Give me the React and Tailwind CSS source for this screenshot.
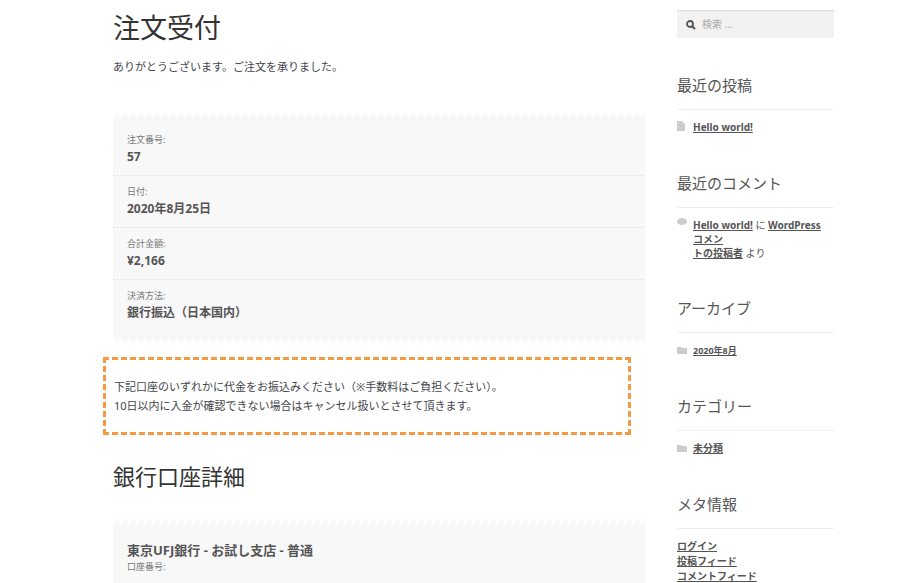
import React from "react";

const Zig = ({ flip }) => (
  <svg className="block w-full h-[6px]" preserveAspectRatio="none" viewBox="0 0 532 6">
    <defs>
      <pattern id={flip ? "zb" : "zt"} width="8" height="6" patternUnits="userSpaceOnUse">
        <path d={flip ? "M0 0 L4 6 L8 0 Z" : "M0 6 L4 0 L8 6 Z"} fill="#f8f8f8" />
      </pattern>
    </defs>
    <rect width="532" height="6" fill={`url(#${flip ? "zb" : "zt"})`} />
  </svg>
);

const Row = ({ label, value, last }) => (
  <div className={`px-[14px] h-[52px] flex flex-col justify-center ${last ? "" : "border-b border-dotted border-[#e2e2e2]"}`}>
    <div className="text-[9px] text-[#777] leading-[14px]">{label}</div>
    <div className="text-[12px] font-bold text-[#555] leading-[20px]">{value}</div>
  </div>
);

const Widget = ({ title, children }) => (
  <div className="mb-[36px]">
    <div className="text-[15px] text-[#555] leading-[24px] pb-[12px] border-b border-[#eee]">{title}</div>
    <div className="pt-[10px] text-[10px] text-[#555]">{children}</div>
  </div>
);

const Icon = ({ children }) => <span className="inline-block w-[10px] mr-[6px] text-[#ccc] shrink-0">{children}</span>;

export default function App() {
  return (
    <div className="w-[919px] h-[583px] overflow-hidden bg-white text-[#43454b]" style={{ fontFamily: "'Noto Sans', 'Noto Sans CJK JP', sans-serif" }}>
      <div className="flex pl-[113px]">
        <div className="w-[532px]">
          <h1 className="text-[27px] text-[#333] leading-[40px] mt-[8px]">注文受付</h1>
          <p className="text-[11px] mt-[10px] leading-[18px]">ありがとうございます。ご注文を承りました。</p>
          <div className="mt-[36px]">
            <Zig />
            <div className="bg-[#f8f8f8] py-[6px]">
              <Row label="注文番号:" value="57" />
              <Row label="日付:" value="2020年8月25日" />
              <Row label="合計金額:" value="¥2,166" />
              <Row label="決済方法:" value="銀行振込（日本国内）" last />
            </div>
            <Zig flip />
          </div>
          <div className="ml-[-10px] w-[528px] mt-[13px] border-[3px] border-dashed border-[#f39a45] h-[78px] flex flex-col justify-center px-[8px] text-[11px] leading-[19px]">
            <div>下記口座のいずれかに代金をお振込みください（※手数料はご負担ください）。</div>
            <div>10日以内に入金が確認できない場合はキャンセル扱いとさせて頂きます。</div>
          </div>
          <h2 className="text-[22px] text-[#333] mt-[24px] leading-[34px]">銀行口座詳細</h2>
          <div className="mt-[25px]">
            <Zig />
            <div className="bg-[#f8f8f8] px-[14px] pt-[16px] pb-[20px]">
              <div className="text-[13px] font-bold text-[#555] leading-[20px]">東京UFJ銀行 - お試し支店 - 普通</div>
              <div className="text-[9px] text-[#777]">口座番号:</div>
            </div>
          </div>
        </div>
        <div className="w-[157px] ml-[32px] pt-[10px]">
          <div className="h-[28px] bg-[#f2f2f2] border-t border-[#ddd] flex items-center px-[9px] text-[10px] text-[#aaa] mb-[35px]">
            <svg width="10" height="10" viewBox="0 0 10 10" className="mr-[6px]"><circle cx="4" cy="4" r="3" fill="none" stroke="#555" strokeWidth="1.8" /><path d="M6.2 6.2 L9 9" stroke="#555" strokeWidth="2" /></svg>
            検索 …
          </div>
          <Widget title="最近の投稿">
            <Icon>
              <svg width="8" height="10" viewBox="0 0 8 10"><path d="M0 0 H5 L8 3 V10 H0 Z" fill="#ccc" /></svg>
            </Icon>
            <span className="font-bold underline">Hello world!</span>
          </Widget>
          <Widget title="最近のコメント">
            <div className="flex leading-[14px]">
              <Icon>
                <svg width="10" height="8" viewBox="0 0 10 8"><ellipse cx="5" cy="3.5" rx="5" ry="3.5" fill="#ccc" /></svg>
              </Icon>
              <div className="w-[140px]"><span className="font-bold underline">Hello world!</span> に <span className="font-bold underline">WordPress コメン<br />トの投稿者</span> より</div>
            </div>
          </Widget>
          <Widget title="アーカイブ">
            <Icon><svg width="10" height="8" viewBox="0 0 10 8"><path d="M0 1 H4 L5 2 H10 V8 H0 Z" fill="#ccc" /></svg></Icon>
            <span className="underline font-bold text-[9px]">2020年8月</span>
          </Widget>
          <Widget title="カテゴリー">
            <Icon><svg width="10" height="8" viewBox="0 0 10 8"><path d="M0 1 H4 L5 2 H10 V8 H0 Z" fill="#ccc" /></svg></Icon>
            <span className="underline font-bold">未分類</span>
          </Widget>
          <Widget title="メタ情報">
            <div className="font-bold underline leading-[15px]">
              <div>ログイン</div>
              <div>投稿フィード</div>
              <div>コメントフィード</div>
              <div>WordPress.org</div>
            </div>
          </Widget>
        </div>
      </div>
    </div>
  );
}
